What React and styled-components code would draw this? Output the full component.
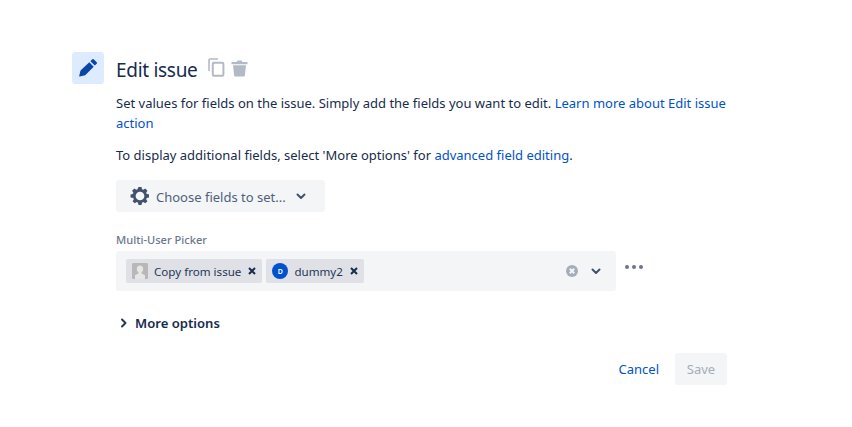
import React from "react";
import styled, { createGlobalStyle } from "styled-components";

const GlobalStyle = createGlobalStyle`
  html, body {
    margin: 0;
    padding: 0;
    background: #fff;
    font-family: "Noto Sans", sans-serif;
    color: #172b4d;
  }
`;

const Page = styled.div`
  width: 852px;
  height: 427px;
  box-sizing: border-box;
  padding: 52px 0 0 72px;
  display: flex;
  gap: 12px;
  overflow: hidden;
`;

const IconBox = styled.div`
  width: 32px;
  height: 32px;
  flex: none;
  border-radius: 3px;
  background: #deebff;
  display: flex;
  align-items: center;
  justify-content: center;
`;

const Content = styled.div`
  width: 611px;
  display: flex;
  flex-direction: column;
`;

const Header = styled.div`
  display: flex;
  align-items: center;
  height: 36px;
  gap: 10px;
`;

const Title = styled.h3`
  margin: 0;
  font-size: 19px;
  font-weight: 400;
  letter-spacing: -0.3px;
  color: #172b4d;
`;

const HeaderActions = styled.div`
  display: flex;
  align-items: center;
  gap: 6px;
  margin-top: -5px;
`;

const Paragraph = styled.p`
  margin: ${(p) => p.$top}px 0 0;
  font-size: 13px;
  line-height: 20px;
  color: #172b4d;
`;

const Link = styled.a`
  color: #0052cc;
  text-decoration: none;
`;

const FieldsButton = styled.div`
  margin-top: 15px;
  width: 209px;
  height: 32px;
  box-sizing: border-box;
  padding-left: 14px;
  display: flex;
  align-items: center;
  gap: 6px;
  border-radius: 3px;
  background: #f4f5f7;
  font-size: 13px;
  color: #505f79;
`;

const FieldsText = styled.span`
  margin-right: 3px;
  padding-top: 1px;
`;

const Label = styled.label`
  display: block;
  margin-top: 20px;
  font-size: 11.1px;
  line-height: 16px;
  font-weight: 500;
  color: #6b778c;
`;

const FieldRow = styled.div`
  display: flex;
  align-items: flex-start;
  margin-top: 3px;
`;

const Picker = styled.div`
  width: 500px;
  height: 40px;
  box-sizing: border-box;
  padding: 0 14px 0 10px;
  display: flex;
  align-items: center;
  gap: 4px;
  border-radius: 3px;
  background: #f4f5f7;
`;

const Tag = styled.div`
  height: 24px;
  box-sizing: border-box;
  padding: 0 6px;
  display: flex;
  align-items: center;
  gap: 6px;
  border-radius: 2px;
  background: #dfe1e6;
  font-size: 11.6px;
  color: #253858;
`;

const Avatar = styled.div`
  width: 16px;
  height: 16px;
  flex: none;
  border-radius: ${(p) => (p.$round ? "50%" : "2px")};
  background: ${(p) => (p.$round ? "#0052cc" : "#b3b3b3")};
  color: #fff;
  font-size: 7px;
  font-weight: 600;
  display: flex;
  align-items: center;
  justify-content: center;
  overflow: hidden;
`;

const CloseWrap = styled.span`
  display: flex;
  margin-left: 1px;
`;

const PickerEnd = styled.div`
  margin-left: auto;
  display: flex;
  align-items: center;
  gap: 12px;
`;

const MoreDots = styled.div`
  margin: 14px 0 0 9px;
  display: flex;
  gap: 3px;
`;

const Dot = styled.span`
  width: 4px;
  height: 4px;
  border-radius: 50%;
  background: #6b778c;
`;

const MoreOptions = styled.div`
  margin-top: 22px;
  height: 20px;
  padding-left: 4px;
  display: flex;
  align-items: center;
  gap: 7px;
  font-size: 13.1px;
  font-weight: 600;
  color: #172b4d;
`;

const Footer = styled.div`
  margin-top: 20px;
  display: flex;
  justify-content: flex-end;
  align-items: center;
  gap: 16px;
`;

const CancelLink = styled.a`
  font-size: 13px;
  color: #0052cc;
`;

const SaveButton = styled.div`
  width: 52px;
  height: 32px;
  border-radius: 3px;
  background: #f4f5f7;
  color: #a5adba;
  font-size: 13px;
  display: flex;
  align-items: center;
  justify-content: center;
`;

const Pencil = () => (
  <svg width="20" height="20" viewBox="0 0 20 20">
    <path d="M14.3 1.300a1 1 0 0 1 1.400 0l3 3a1 1 0 0 1 0 1.400l-1.900 1.900-4.400-4.400z M11.300 4.300l4.400 4.400-8.500 8.500-5.500 1.300a.4.4 0 0 1-.5-.5l1.300-5.500z" fill="#0747a6" />
  </svg>
);

const CopyIcon = () => (
  <svg width="17" height="19" viewBox="0 0 17 19" fill="none" stroke="#b3bac5" strokeWidth="1.600">
    <path d="M1 13V2a1 1 0 0 1 1-1h8" />
    <rect x="4.800" y="4.800" width="10.600" height="13" rx="1.200" strokeWidth="2" />
  </svg>
);

const TrashIcon = () => (
  <svg width="17" height="18" viewBox="0 0 17 18">
    <path d="M0.500 3h5l1-1.600h4L11.500 3h5v2.200H.5z M2 6.200h13l-1.100 10.400a1.200 1.200 0 0 1-1.200 1H4.300a1.200 1.200 0 0 1-1.200-1z" fill="#b3bac5" />
  </svg>
);

const Gear = () => (
  <svg width="20" height="20" viewBox="-1 -1 22 22">
    <path
      fillRule="evenodd"
      d="M8.300 0h3.400l.5 2.500 1.400.6 2.200-1.400 2.400 2.400-1.400 2.200.6 1.400 2.500.5v3.400l-2.500.5-.6 1.400 1.400 2.200-2.400 2.400-2.200-1.400-1.400.6-.5 2.500H8.300l-.5-2.500-1.400-.6-2.200 1.400-2.400-2.400 1.400-2.200-.6-1.400L-.4 11.700V8.300l2.500-.5.6-1.400-1.400-2.200 2.400-2.400 2.200 1.400 1.400-.6zM10 5.200a4.800 4.800 0 1 0 0 9.600 4.800 4.800 0 0 0 0-9.600z"
      fill="#42526e"
    />
  </svg>
);

const Chevron = ({ color = "#42526e", size = 12 }) => (
  <svg width={size} height={size} viewBox="0 0 12 12" fill="none" stroke={color} strokeWidth="2" strokeLinecap="round" strokeLinejoin="round">
    <path d="M2.500 4.500 6 8l3.500-3.500" />
  </svg>
);

const ChevronRight = () => (
  <svg width="8" height="10" viewBox="0 0 8 10" fill="none" stroke="#253858" strokeWidth="2" strokeLinecap="round" strokeLinejoin="round">
    <path d="M2 1.500 5.500 5 2 8.500" />
  </svg>
);

const TagClose = () => (
  <CloseWrap>
    <svg width="8" height="8" viewBox="0 0 8 8" stroke="#172b4d" strokeWidth="2">
      <path d="M1 1l6 6M7 1L1 7" />
    </svg>
  </CloseWrap>
);

const ClearIcon = () => (
  <svg width="12" height="12" viewBox="0 0 12 12">
    <circle cx="6" cy="6" r="6" fill="#a5adba" />
    <path d="M3.800 3.800l4.400 4.400M8.200 3.800l-4.400 4.400" stroke="#f4f5f7" strokeWidth="2" />
  </svg>
);

const UserSilhouette = () => (
  <svg width="16" height="16" viewBox="0 0 16 16">
    <rect width="16" height="16" fill="#b8b8b8" />
    <path d="M8 2.500c2 0 3.200 1.400 3.200 3.400 0 1.500-.7 2.700-1.600 3.300v1.300l3.400 1.700V16H3v-3.800l3.400-1.700V9.200C5.500 8.600 4.800 7.400 4.800 5.900c0-2 1.200-3.400 3.200-3.400z" fill="#e6e6e6" />
  </svg>
);

export default function App() {
  return (
    <Page>
      <GlobalStyle />
      <IconBox>
        <Pencil />
      </IconBox>
      <Content>
        <Header>
          <Title>Edit issue</Title>
          <HeaderActions>
            <CopyIcon />
            <TrashIcon />
          </HeaderActions>
        </Header>
        <Paragraph $top={5}>
          Set values for fields on the issue. Simply add the fields you want to edit.{" "}
          <Link>Learn more about Edit issue</Link> <Link>action</Link>
        </Paragraph>
        <Paragraph $top={12}>
          To display additional fields, select 'More options' for <Link>advanced field editing</Link>.
        </Paragraph>
        <FieldsButton>
          <Gear />
          <FieldsText>Choose fields to set...</FieldsText>
          <Chevron />
        </FieldsButton>
        <Label>Multi-User Picker</Label>
        <FieldRow>
          <Picker>
            <Tag>
              <Avatar>
                <UserSilhouette />
              </Avatar>
              <span>Copy from issue</span>
              <TagClose />
            </Tag>
            <Tag>
              <Avatar $round>D</Avatar>
              <span>dummy2</span>
              <TagClose />
            </Tag>
            <PickerEnd>
              <ClearIcon />
              <Chevron />
            </PickerEnd>
          </Picker>
          <MoreDots>
            <Dot />
            <Dot />
            <Dot />
          </MoreDots>
        </FieldRow>
        <MoreOptions>
          <ChevronRight />
          <span>More options</span>
        </MoreOptions>
        <Footer>
          <CancelLink>Cancel</CancelLink>
          <SaveButton>Save</SaveButton>
        </Footer>
      </Content>
    </Page>
  );
}
